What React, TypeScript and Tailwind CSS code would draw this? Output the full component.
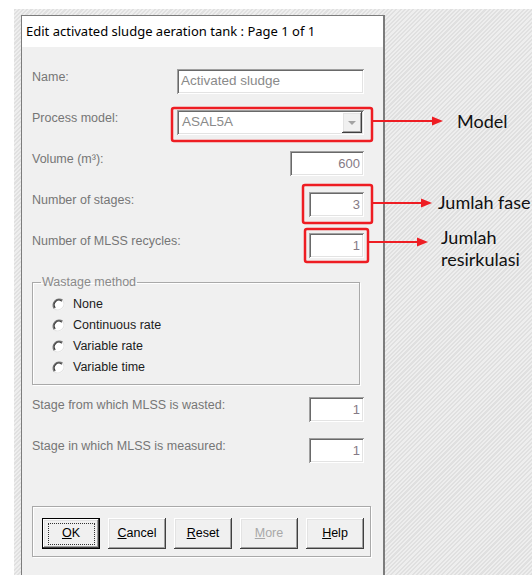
import * as React from "react";

// sunken edit box / raised push button edges (classic 3D look)
const sunken =
  "bg-white shadow-[inset_1px_1px_#a0a0a0,inset_-1px_-1px_#ffffff,inset_2px_2px_#696969,inset_-2px_-2px_#e3e3e3]";
const raised =
  "bg-[#f0f0f0] shadow-[inset_-1px_-1px_#404040,inset_1px_1px_#ffffff,inset_-2px_-2px_#a0a0a0,inset_2px_2px_#e3e3e3]";

const Row: React.FC<{ label: string; children: React.ReactNode; tall?: boolean }> = ({ label, children, tall = true }) => (
  <div className={`flex items-start justify-between ${tall ? "h-[41px]" : "h-[25px]"}`}>
    <span className="pt-[1px] text-[12.5px] leading-[15px] text-[#767676]">{label}</span>
    {children}
  </div>
);

const NumberBox: React.FC<{ value: string; wide?: boolean }> = ({ value, wide }) => (
  <div className={`${sunken} flex h-[25px] items-center justify-end pr-[4px] text-[13px] text-[#857a85] ${wide ? "w-[74px]" : "w-[55px]"}`}>
    {value}
  </div>
);

const Radio: React.FC<{ label: string }> = ({ label }) => (
  <div className="flex h-[21px] items-center">
    <svg width="13" height="13" viewBox="0 0 13 13" className="mr-[8px] shrink-0">
      <circle cx="6.5" cy="6.5" r="6" fill="#ffffff" />
      <path d="M10.7 2.3A6 6 0 0 0 2.3 10.7" fill="none" stroke="#7a7a7a" strokeWidth="1.3" />
      <path d="M9.8 3.2A4.7 4.7 0 0 0 3.2 9.8" fill="none" stroke="#3a3a3a" strokeWidth="1.2" />
      <path d="M2.3 10.7A6 6 0 0 0 10.7 2.3" fill="none" stroke="#e4e4e4" strokeWidth="1.2" />
    </svg>
    <span className="text-[12.5px] text-[#1c1c1c]">{label}</span>
  </div>
);

const Button: React.FC<{ hot: string; rest: string; isDefault?: boolean; disabled?: boolean }> = ({
  hot,
  rest,
  isDefault,
  disabled,
}) => (
  <div
    className={`${raised} flex h-[31px] w-[58px] items-center justify-center text-[12.5px] ${
      isDefault ? "border border-black" : ""
    } ${disabled ? "text-[#a8a8a8]" : "text-black"}`}
  >
    {isDefault ? (
      <span className="flex h-[22px] w-[47px] items-center justify-center border border-dotted border-[#333]">
        <span className="underline">{hot}</span>
        {rest}
      </span>
    ) : (
      <span>
        <span className="underline">{hot}</span>
        {rest}
      </span>
    )}
  </div>
);

const Dialog: React.FC = () => (
  <div className="flex h-[560px] w-[364px] flex-col border-l border-t border-r-2 border-[#7c7c7c]">
    <div className="flex h-[31px] items-center bg-white pl-[4px] pt-[1px] font-['Noto_Sans',sans-serif] text-[13px] text-black">
      Edit activated sludge aeration tank : Page 1 of 1
    </div>

    <div className="flex-1 bg-[#f0f0f0] pl-[10px] pr-[19px] pt-[22px]">
      <Row label="Name:">
        <div className={`${sunken} flex h-[25px] w-[187px] items-center pl-[4px] text-[13.5px] text-[#8a8a8a]`}>
          Activated sludge
        </div>
      </Row>
      <Row label="Process model:">
        <div className={`${sunken} flex h-[25px] w-[187px] items-center justify-between pl-[5px] pr-[2px] text-[13.5px] text-[#8a8a8a]`}>
          <span>ASAL5A</span>
          <span className={`${raised} flex h-[21px] w-[20px] items-center justify-center`}>
            <svg width="8" height="4" viewBox="0 0 8 4">
              <path d="M0 0h8L4 4z" fill="#a3a3a3" />
            </svg>
          </span>
        </div>
      </Row>
      <Row label="Volume (m³):">
        <NumberBox value="600" wide />
      </Row>
      <Row label="Number of stages:">
        <NumberBox value="3" />
      </Row>
      <Row label="Number of MLSS recycles:">
        <NumberBox value="1" />
      </Row>

      <fieldset className="mr-[4px] mt-[1px] border border-[#a9a9a9] shadow-[inset_1px_1px_#ffffff,1px_1px_#ffffff]">
        <legend className="ml-[8px] px-[1px] text-[12.5px] leading-[15px] text-[#8a8a8a]">Wastage method</legend>
        <div className="pb-[6px] pl-[19px] pt-[4px]">
          <Radio label="None" />
          <Radio label="Continuous rate" />
          <Radio label="Variable rate" />
          <Radio label="Variable time" />
        </div>
      </fieldset>

      <div className="mt-[12px]">
        <Row label="Stage from which MLSS is wasted:">
          <NumberBox value="1" />
        </Row>
        <Row label="Stage in which MLSS is measured:">
          <NumberBox value="1" />
        </Row>
      </div>

      <div className="mr-[-7px] mt-[27px] flex gap-[8px] border border-[#a9a9a9] pb-[7px] pl-[9px] pt-[11px] shadow-[inset_1px_1px_#ffffff,1px_1px_#ffffff]">
        <Button hot="O" rest="K" isDefault />
        <Button hot="C" rest="ancel" />
        <Button hot="R" rest="eset" />
        <Button hot="M" rest="ore" disabled />
        <Button hot="H" rest="elp" />
      </div>
    </div>
  </div>
);

// red call-outs drawn over the dialog
const Callouts: React.FC = () => (
  <>
    <svg className="pointer-events-none absolute left-0 top-0" width="532" height="575" viewBox="0 0 532 575">
      <g fill="none" stroke="#ee1d23" strokeWidth="2.5">
        <rect x="172" y="108" width="200" height="33" rx="2" />
        <rect x="303" y="185" width="69" height="38" rx="2" />
        <rect x="305" y="229" width="63" height="33" rx="2" />
      </g>
      <g stroke="#ee1d23" strokeWidth="2">
        <line x1="372" y1="121" x2="434" y2="121" />
        <line x1="372" y1="203" x2="423" y2="203" />
        <line x1="368" y1="242" x2="419" y2="242" />
      </g>
      <g fill="#ee1d23">
        <path d="M443 121l-11-4.5v9z" />
        <path d="M432 203l-11-4.5v9z" />
        <path d="M428 242l-11-4.5v9z" />
      </g>
    </svg>
    <div className="absolute left-[457px] top-[110px] font-['Lato',sans-serif] text-[18px] leading-[22px] text-[#111]">Model</div>
    <div className="absolute left-[438px] top-[191px] whitespace-nowrap font-['Lato',sans-serif] text-[18px] leading-[22px] text-[#111]">
      Jumlah fase
    </div>
    <div className="absolute left-[441px] top-[226px] font-['Lato',sans-serif] text-[18px] leading-[22px] text-[#111]">
      Jumlah
      <br />
      resirkulasi
    </div>
  </>
);

export default function App() {
  return (
    <div className="relative h-[575px] w-[532px] overflow-hidden bg-white font-['Liberation_Sans',Arial,sans-serif]">
      <div className="ml-[14px] mt-[9px] h-[566px] bg-[repeating-linear-gradient(135deg,#e0e0e0_0px,#e0e0e0_1.5px,#eeeeee_1.5px,#eeeeee_3px)] pl-[7px] pt-[6px]">
        <Dialog />
      </div>
      <Callouts />
    </div>
  );
}
